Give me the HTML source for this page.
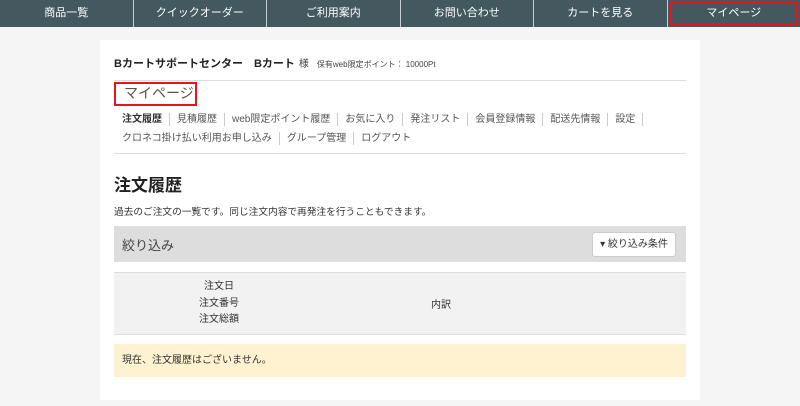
<!DOCTYPE html>
<html><head><meta charset="utf-8"><style>
*{margin:0;padding:0;box-sizing:border-box}
body{width:800px;height:406px;background:#f5f5f5;font-family:"Liberation Sans","Noto Sans CJK JP",sans-serif;color:#333;overflow:hidden;position:relative}
.nav{position:absolute;left:0;top:0;width:800px;height:27px;background:#44585f;display:flex}
.nav div{flex:1;color:#fff;font-size:11px;text-align:center;line-height:27px;border-right:1px solid #c8d0d3}
.nav div:last-child{border-right:none;position:relative}
.nav div:last-child:after{content:"";position:absolute;left:2px;top:1px;right:3px;bottom:2px;border:2px solid #e8141c}
.panel{position:absolute;left:100px;top:40px;width:600px;height:360px;background:#fff}
.abs{position:absolute}
.name{left:14px;top:15px;font-size:11px;font-weight:bold;color:#222}
.name small{font-weight:normal;font-size:10px;color:#444;margin-left:4px}
.name small.pt{font-size:8px;margin-left:8px}
.hr{left:14px;width:572px;height:1px;background:#ddd}
.mp{left:14px;top:42px;width:83px;height:24px;border:2px solid #e8141c;font-size:14px;color:#555;padding-left:8px;line-height:19px}
.links{left:22px;font-size:10px;color:#555;white-space:nowrap}
.links span{display:inline-block;padding:0 7px;border-right:1px solid #ccc;line-height:13px}
.links span:first-child{padding-left:0}
h1{position:absolute;left:14px;top:131px;font-size:17px;color:#222}
.desc{left:14px;top:164px;font-size:9.7px;color:#333}
.bar{left:14px;top:186px;width:572px;height:36px;background:#ddd}
.bar .t{position:absolute;left:8px;top:9px;font-size:13px;color:#444}
.btn{position:absolute;right:10px;top:6px;width:84px;height:25px;background:#fff;border:1px solid #ccc;border-radius:3px;font-size:10px;text-align:center;line-height:23px;color:#333}
.th{left:14px;top:232px;width:572px;height:63px;background:#f2f2f2;border-top:1px solid #ddd;border-bottom:1px solid #ddd;font-size:10px;color:#333}
.yel{left:14px;top:304px;width:572px;height:33px;background:#fff2d0;font-size:10px;padding-left:8px;line-height:33px}
</style></head><body>
<div class="nav"><div>商品一覧</div><div>クイックオーダー</div><div>ご利用案内</div><div>お問い合わせ</div><div>カートを見る</div><div>マイページ</div></div>
<div class="panel">
<div class="abs name">Bカートサポートセンター　Bカート<small>様</small><small class="pt">保有web限定ポイント： 10000Pt</small></div>
<div class="abs hr" style="top:40px"></div>
<div class="abs mp">マイページ</div>
<div class="abs links" style="top:73px"><span style="font-weight:bold;color:#333">注文履歴</span><span>見積履歴</span><span>web限定ポイント履歴</span><span>お気に入り</span><span>発注リスト</span><span>会員登録情報</span><span>配送先情報</span><span>設定</span></div>
<div class="abs links" style="top:92px"><span>クロネコ掛け払い利用お申し込み</span><span>グループ管理</span><span style="border:none">ログアウト</span></div>
<div class="abs hr" style="top:113px"></div>
<h1>注文履歴</h1>
<div class="abs desc">過去のご注文の一覧です。同じ注文内容で再発注を行うこともできます。</div>
<div class="abs bar"><div class="t">絞り込み</div><div class="btn">▾ 絞り込み条件</div></div>
<div class="abs th">
<div class="abs" style="left:60px;top:6px;width:90px;text-align:center;line-height:16.5px">注文日<br>注文番号<br>注文総額</div>
<div class="abs" style="left:317px;top:23px">内訳</div>
</div>
<div class="abs yel">現在、注文履歴はございません。</div>
</div>
</body></html>
